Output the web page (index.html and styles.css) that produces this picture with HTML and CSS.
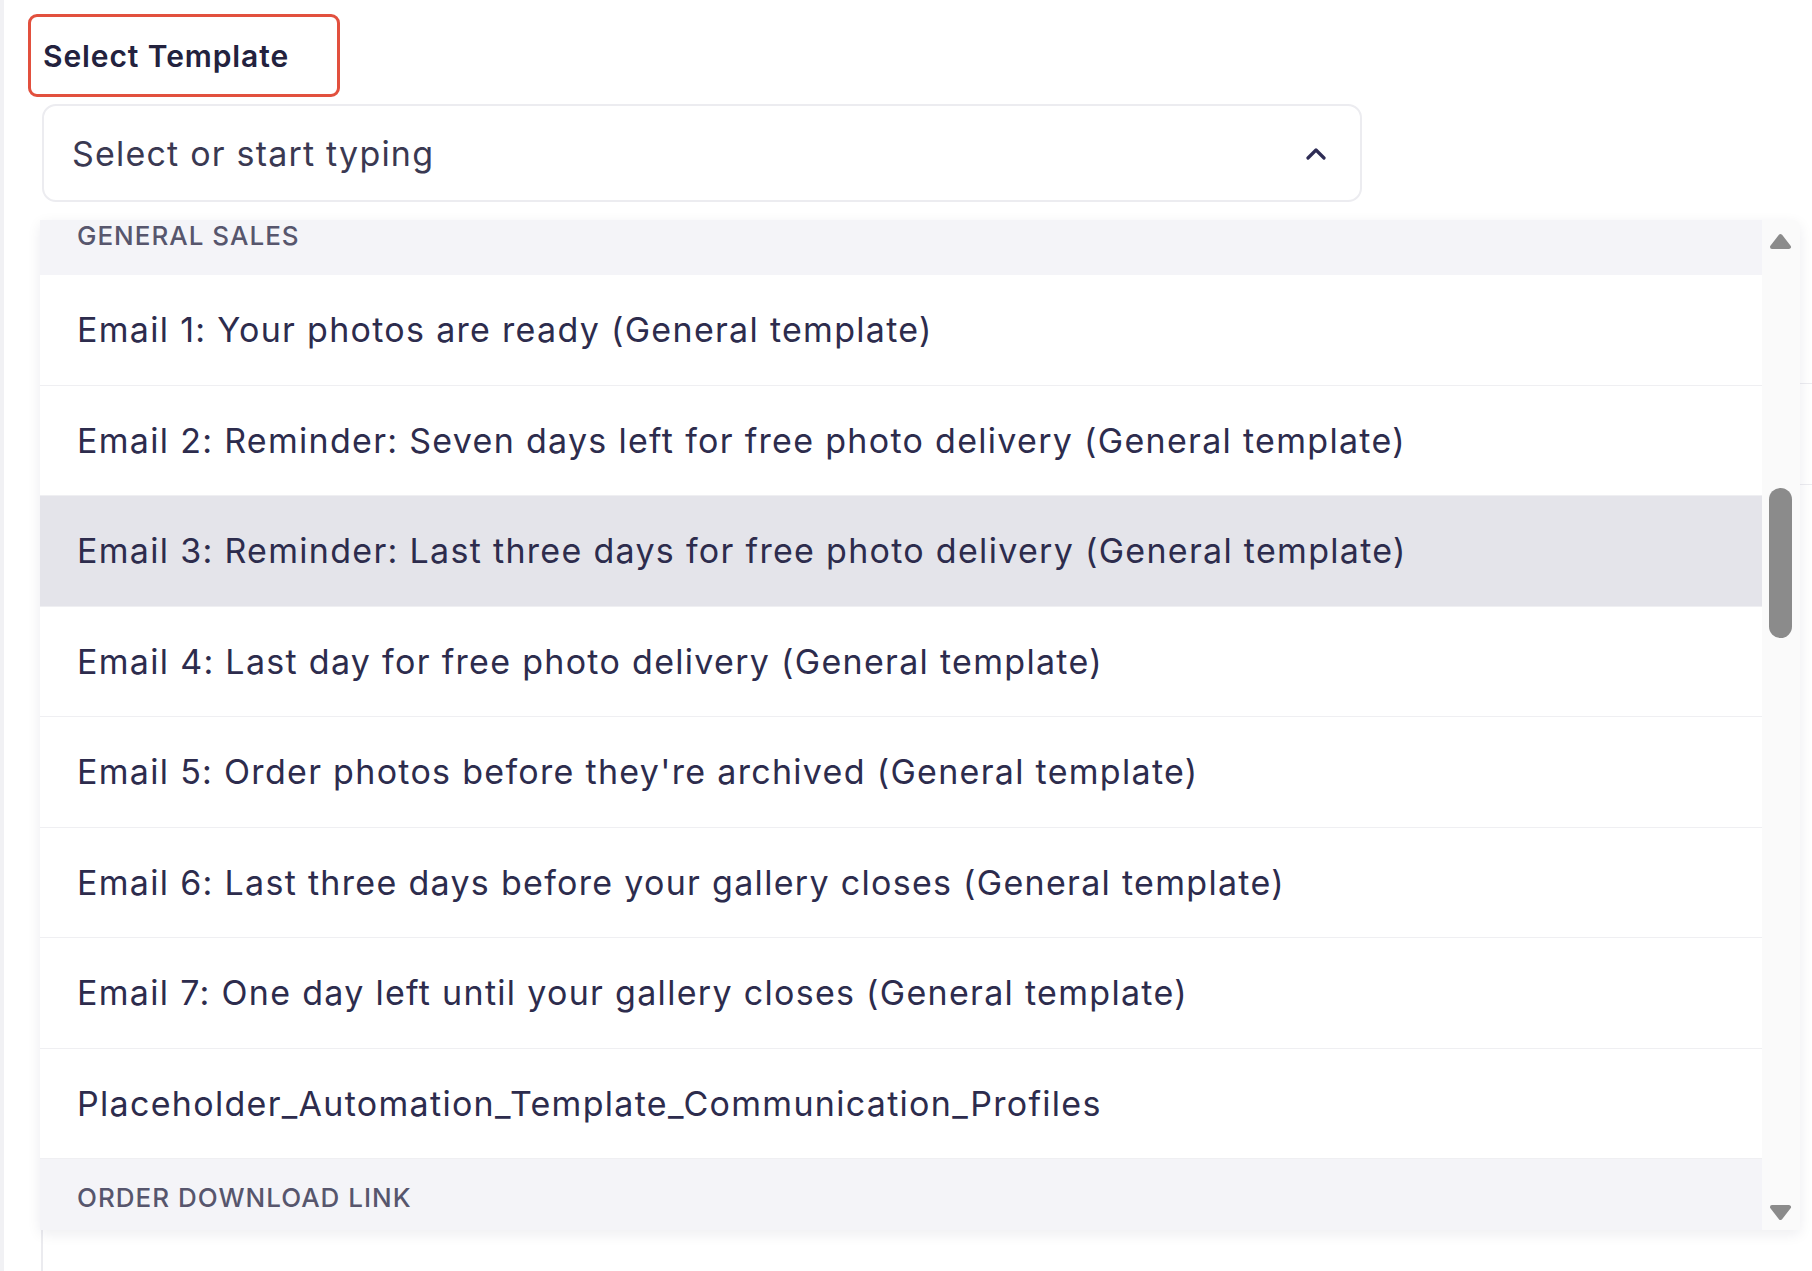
FILE: index.html
```html
<!DOCTYPE html>
<html>
    <head>
        <meta charset="utf-8">
        <title>Select Template</title>
        <link rel="stylesheet" href="styles.css">
    </head>
    <body>
        <div class="page">
            <div class="field">
                <!-- label -->
                <div class="label-box">
                    <span class="label-text">Select Template</span>
                </div>
                <!-- select -->
                <div class="select-box">
                    <span class="select-placeholder">Select or start typing</span>
                    <svg class="chevron" width="22" height="13" viewBox="0 0 22 13">
                        <path d="M3 11 L11 3 L19 11" fill="none" stroke="#2e2c55" stroke-width="3.2" stroke-linecap="round" stroke-linejoin="round"/>
                    </svg>
                </div>
                <!-- dropdown menu -->
                <div class="dropdown">
                    <div class="dropdown-list">
                        <div class="group-title group-title-first">GENERAL SALES</div>
                        <div class="option">Email 1: Your photos are ready (General template)</div>
                        <div class="option">Email 2: Reminder: Seven days left for free photo delivery (General template)</div>
                        <div class="option option-active">Email 3: Reminder: Last three days for free photo delivery (General template)</div>
                        <div class="option">Email 4: Last day for free photo delivery (General template)</div>
                        <div class="option">Email 5: Order photos before they're archived (General template)</div>
                        <div class="option">Email 6: Last three days before your gallery closes (General template)</div>
                        <div class="option">Email 7: One day left until your gallery closes (General template)</div>
                        <div class="option">Placeholder_Automation_Template_Communication_Profiles</div>
                        <div class="group-title group-title-last">ORDER DOWNLOAD LINK</div>
                    </div>
                    <div class="scrollbar">
                        <svg class="scroll-arrow" width="23" height="17" viewBox="0 0 23 17">
                            <path d="M11.5 3 L20 14 L3 14 Z" fill="#8b8b8b" stroke="#8b8b8b" stroke-width="4" stroke-linejoin="round"/>
                        </svg>
                        <div class="scroll-thumb"></div>
                        <svg class="scroll-arrow scroll-arrow-down" width="23" height="18" viewBox="0 0 23 18">
                            <path d="M11.5 15 L20 4 L3 4 Z" fill="#8b8b8b" stroke="#8b8b8b" stroke-width="4" stroke-linejoin="round"/>
                        </svg>
                    </div>
                </div>
            </div>
            <!-- content under the menu -->
            <div class="under-row"></div>
            <div class="under-field"></div>
        </div>
    </body>
</html>
```

FILE: styles.css
```css
body {
    margin: 0;
    background: #ffffff;
    font-family: Inter, "Noto Sans", sans-serif;
}
.page {
    height: 1271px;
    box-sizing: border-box;
    border-left: 4px solid #f1f1f4;
    padding: 14px 0 0 24px;
    overflow: hidden;
}
.field {
    position: relative;
}
.label-box {
    display: flex;
    align-items: center;
    box-sizing: border-box;
    width: 312px;
    height: 83px;
    padding: 0 12px;
    border: 3px solid #e2503e;
    border-radius: 9px;
}
.label-text {
    font-size: 30px;
    font-weight: 600;
    letter-spacing: 0.9px;
    color: #23223e;
}
.select-box {
    display: flex;
    align-items: center;
    justify-content: space-between;
    box-sizing: border-box;
    width: 1320px;
    height: 98px;
    margin: 7px 0 0 14px;
    padding: 0 33px 0 28px;
    border: 2px solid #ececf0;
    border-radius: 14px;
}
.select-placeholder {
    font-size: 34px;
    letter-spacing: 1.2px;
    color: #3a3952;
}
.dropdown {
    position: absolute;
    left: 12px;
    top: 206px;
    width: 1760px;
    height: 1010px;
    display: flex;
    background: #ffffff;
    border-radius: 4px 6px 4px 4px;
    box-shadow: 0 4px 14px rgba(30, 30, 60, 0.08);
    z-index: 2;
}
.dropdown-list {
    flex: 1;
}
.group-title {
    box-sizing: border-box;
    padding-left: 37px;
    background: #f4f4f8;
    font-size: 26px;
    font-weight: 500;
    color: #57566d;
    letter-spacing: 1px;
}
.group-title-first {
    height: 55px;
    padding-top: 2px;
    line-height: 28px;
}
.group-title-last {
    height: 71px;
    padding-top: 25px;
    line-height: 28px;
}
.option {
    display: flex;
    align-items: center;
    box-sizing: border-box;
    height: 110.5px;
    padding-left: 37px;
    border-bottom: 1px solid #efeff2;
    font-size: 34px;
    letter-spacing: 1.3px;
    color: #2d2c4d;
}
.option-active {
    background: #e4e4ea;
}
.scrollbar {
    display: flex;
    flex-direction: column;
    box-sizing: border-box;
    width: 38px;
    padding: 13px 0 9px 7px;
    background: #fafafa;
    border-radius: 0 6px 0 0;
}
.scroll-thumb {
    width: 23px;
    height: 150px;
    margin-top: 238px;
    background: #8b8b8b;
    border-radius: 12px;
}
.scroll-arrow-down {
    margin-top: auto;
}
.under-row {
    margin: 181px 0 0 14px;
    height: 100px;
    border-top: 1px solid #ececf0;
    border-bottom: 1px solid #ececf0;
}
.under-field {
    height: 120px;
    margin: 736px 0 0 13px;
    border-left: 2px solid #ebebef;
}
```
